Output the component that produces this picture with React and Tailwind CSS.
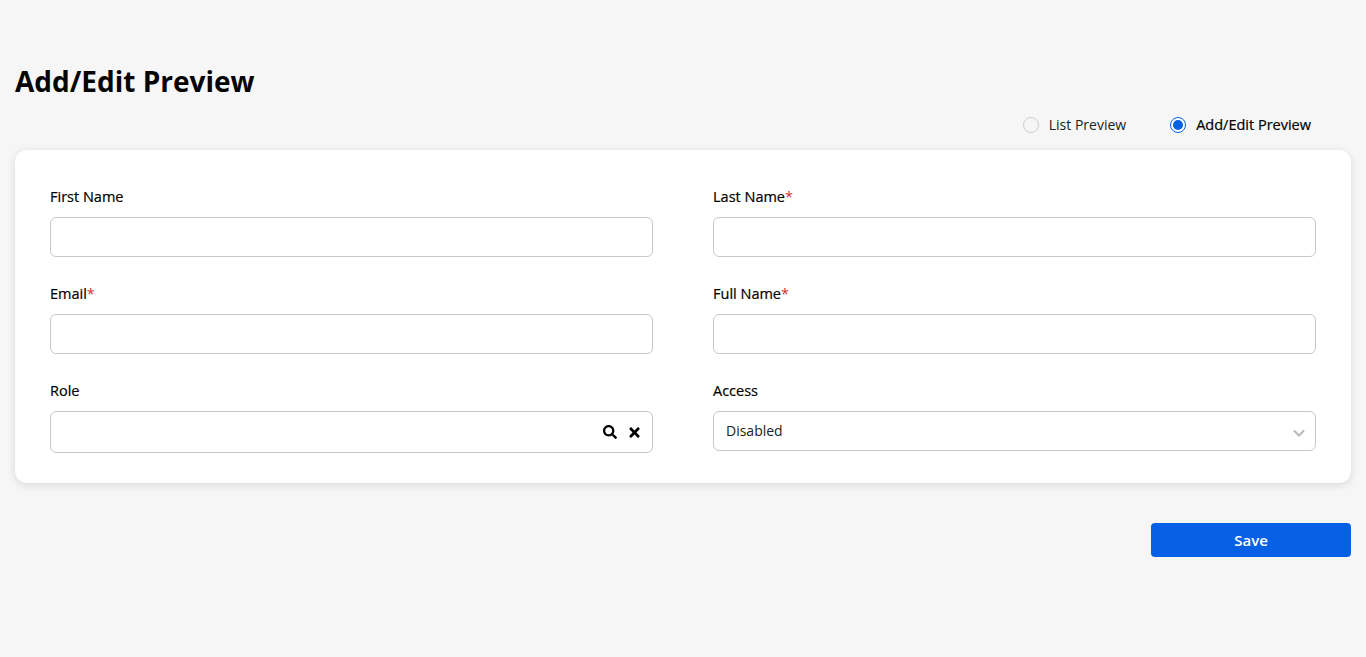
import { FaSearch, FaTimes } from "react-icons/fa";

function Label({ text, required }) {
  return (
    <label className="block h-5 text-[14.5px] leading-5 font-medium text-black [-webkit-text-stroke:0.2px]">
      {text}
      {required && <span className="font-normal text-[#d32f2f] [-webkit-text-stroke:0]">*</span>}
    </label>
  );
}

function Field({ text, required }) {
  return (
    <div>
      <Label text={text} required={required} />
      <input className="mt-[10px] block h-10 w-full rounded-md border border-[#c8c8c8] bg-white px-3 text-sm" />
    </div>
  );
}

export default function App() {
  return (
    <div className="min-h-[657px] bg-[#f6f6f6] px-[15px] pt-[62px] font-['Open_Sans','Noto_Sans',sans-serif]">
      <h1 className="h-[38px] text-[28px] leading-[38px] font-bold text-[#050505]">Add/Edit Preview</h1>

      {/* Preview switch */}
      <div className="mt-[15px] mb-[-1px] flex h-[20px] items-center justify-end pr-[40px] text-sm">
        <div className="flex items-center gap-[10px] text-[#222]">
          <span className="h-4 w-4 rounded-full border border-[#cfcfcf] bg-[#f6f6f6]" />
          List Preview
        </div>
        <div className="ml-[44px] flex items-center gap-[10px] text-[14.5px] font-medium text-black [-webkit-text-stroke:0.2px]">
          <span className="flex h-4 w-4 items-center justify-center rounded-full border border-[#0560e6] bg-white">
            <span className="h-[10px] w-[10px] rounded-full bg-[#0560e6]" />
          </span>
          Add/Edit Preview
        </div>
      </div>

      {/* Form card */}
      <div className="mt-[16px] grid h-[333px] grid-cols-2 content-start gap-x-[60px] gap-y-[27px] rounded-xl bg-white px-[35px] pt-[37px] shadow-[0_2px_8px_rgba(0,0,0,0.12)]">
        <Field text="First Name" />
        <Field text="Last Name" required />
        <Field text="Email" required />
        <Field text="Full Name" required />
        <div>
          <Label text="Role" />
          <div className="mt-[10px] flex h-[42px] items-center justify-end rounded-md border border-[#c8c8c8] bg-white pr-[10px] text-black">
            <FaSearch className="text-[14px]" />
            <FaTimes className="ml-[10px] text-[15px]" />
          </div>
        </div>
        <div>
          <Label text="Access" />
          <div className="mt-[10px] flex h-10 items-center justify-between rounded-md border border-[#c8c8c8] bg-white pr-[9px] pl-3 text-sm text-[#222]">
            Disabled
            <svg width="14" height="14" viewBox="0 0 14 14" fill="none" className="mt-[3px]">
              <path d="M2 4.5 7 9.5 12 4.5" stroke="#b8b8b8" strokeWidth="2" />
            </svg>
          </div>
        </div>
      </div>

      <div className="mt-10 flex justify-end">
        <button className="h-[34px] w-[200px] rounded bg-[#0560e6] pt-px text-[15px] font-semibold text-white">Save</button>
      </div>
    </div>
  );
}
